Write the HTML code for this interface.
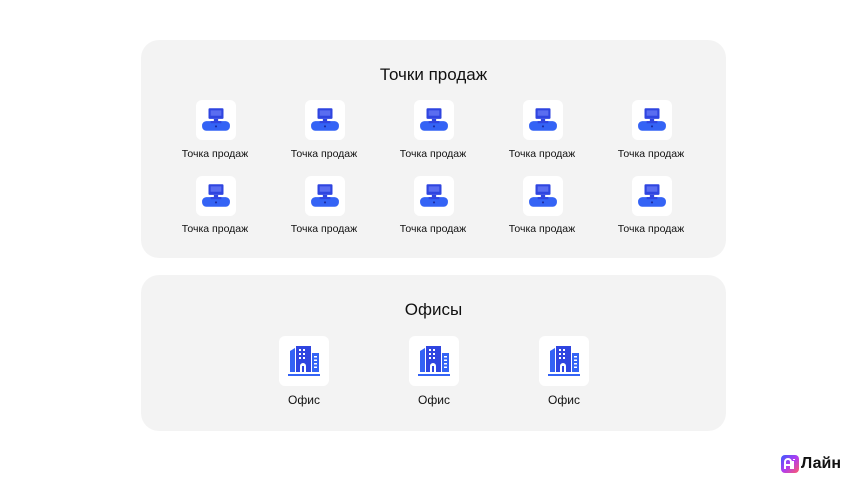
<!DOCTYPE html>
<html><head><meta charset="utf-8"><style>
*{margin:0;padding:0;box-sizing:border-box}
body{width:867px;height:496px;background:#fff;font-family:"Liberation Sans",sans-serif;position:relative;overflow:hidden;color:#111}
.panel{position:absolute;left:141px;width:585px;background:#f3f3f3;border-radius:18px}
.title{position:absolute;left:0;width:100%;text-align:center;font-size:17px}
.tile{position:absolute;background:#fff;border-radius:6px;display:flex;align-items:center;justify-content:center}
.lbl{position:absolute;width:100px;text-align:center;font-size:10.5px}
.lbl2{position:absolute;width:100px;text-align:center;font-size:12px}
</style></head><body>
<div class="panel" style="top:40px;height:218px"><div class="title" style="top:25px">Точки продаж</div></div>
<div class="panel" style="top:275px;height:156px"><div class="title" style="top:25px">Офисы</div></div>
<div id="c"></div>
<script>
const pos='<svg width="30" height="26" viewBox="0 0 28 24"><rect x="7" y="1" width="14" height="10" rx="1" fill="#2f45e0"/><rect x="9" y="3" width="10" height="5" fill="#5a6df0"/><rect x="12" y="11" width="4" height="3" fill="#2f45e0"/><rect x="1" y="13" width="26" height="9" rx="4" fill="#3463f5"/><rect x="9" y="13" width="10" height="2" fill="#2f45e0"/><circle cx="14" cy="18" r="1" fill="#1b2aa0"/></svg>';
const off='<svg width="34" height="32" viewBox="0 0 34 32"><path d="M3 6 L8 3 V27 H3 Z" fill="#3463f5"/><rect x="9" y="1" width="15" height="26" fill="#2f45e0"/><g fill="#fff"><rect x="12" y="4" width="2" height="2"/><rect x="16" y="4" width="2" height="2"/><rect x="12" y="8" width="2" height="2"/><rect x="16" y="8" width="2" height="2"/><rect x="12" y="12" width="2" height="2"/><rect x="16" y="12" width="2" height="2"/><path d="M13 27 V21 a3 3 0 0 1 6 0 V27 h-2 V21 h-2 V27 Z"/></g><rect x="25" y="8" width="7" height="19" fill="#3463f5"/><g fill="#fff"><rect x="27" y="11" width="3" height="1.5"/><rect x="27" y="14.5" width="3" height="1.5"/><rect x="27" y="18" width="3" height="1.5"/><rect x="27" y="21.5" width="3" height="1.5"/></g><rect x="1" y="29" width="32" height="2" fill="#3463f5"/></svg>';
let h='';
[216,325,434,543,652].forEach(c=>{[[100,153],[176,228]].forEach(([t,l])=>{h+=`<div class="tile" style="left:${c-20}px;top:${t}px;width:40px;height:40px">${pos}</div><div class="lbl" style="left:${c-51}px;top:${l-5}px">Точка продаж</div>`})});
[304,434,564].forEach(c=>{h+=`<div class="tile" style="left:${c-25}px;top:336px;width:50px;height:50px">${off}</div><div class="lbl2" style="left:${c-50}px;top:393px">Офис</div>`});
document.getElementById('c').innerHTML=h;
</script>
<svg style="position:absolute;left:781px;top:455px" width="18" height="18" viewBox="0 0 18 18"><defs><linearGradient id="g" x1="0" y1="0" x2="1" y2="1"><stop offset="0" stop-color="#3a5bff"/><stop offset=".5" stop-color="#b03cf0"/><stop offset="1" stop-color="#ff5a6a"/></linearGradient></defs><rect width="18" height="18" rx="4" fill="url(#g)"/><path d="M4 14 V7 a3 3 0 0 1 6 0 V14 M4 10 H10 M12 6 V14 M13 4 V5" stroke="#fff" stroke-width="2" fill="none"/></svg>
<div style="position:absolute;left:801px;top:455px;font-size:16px;font-weight:bold">Лайн</div>
</body></html>
